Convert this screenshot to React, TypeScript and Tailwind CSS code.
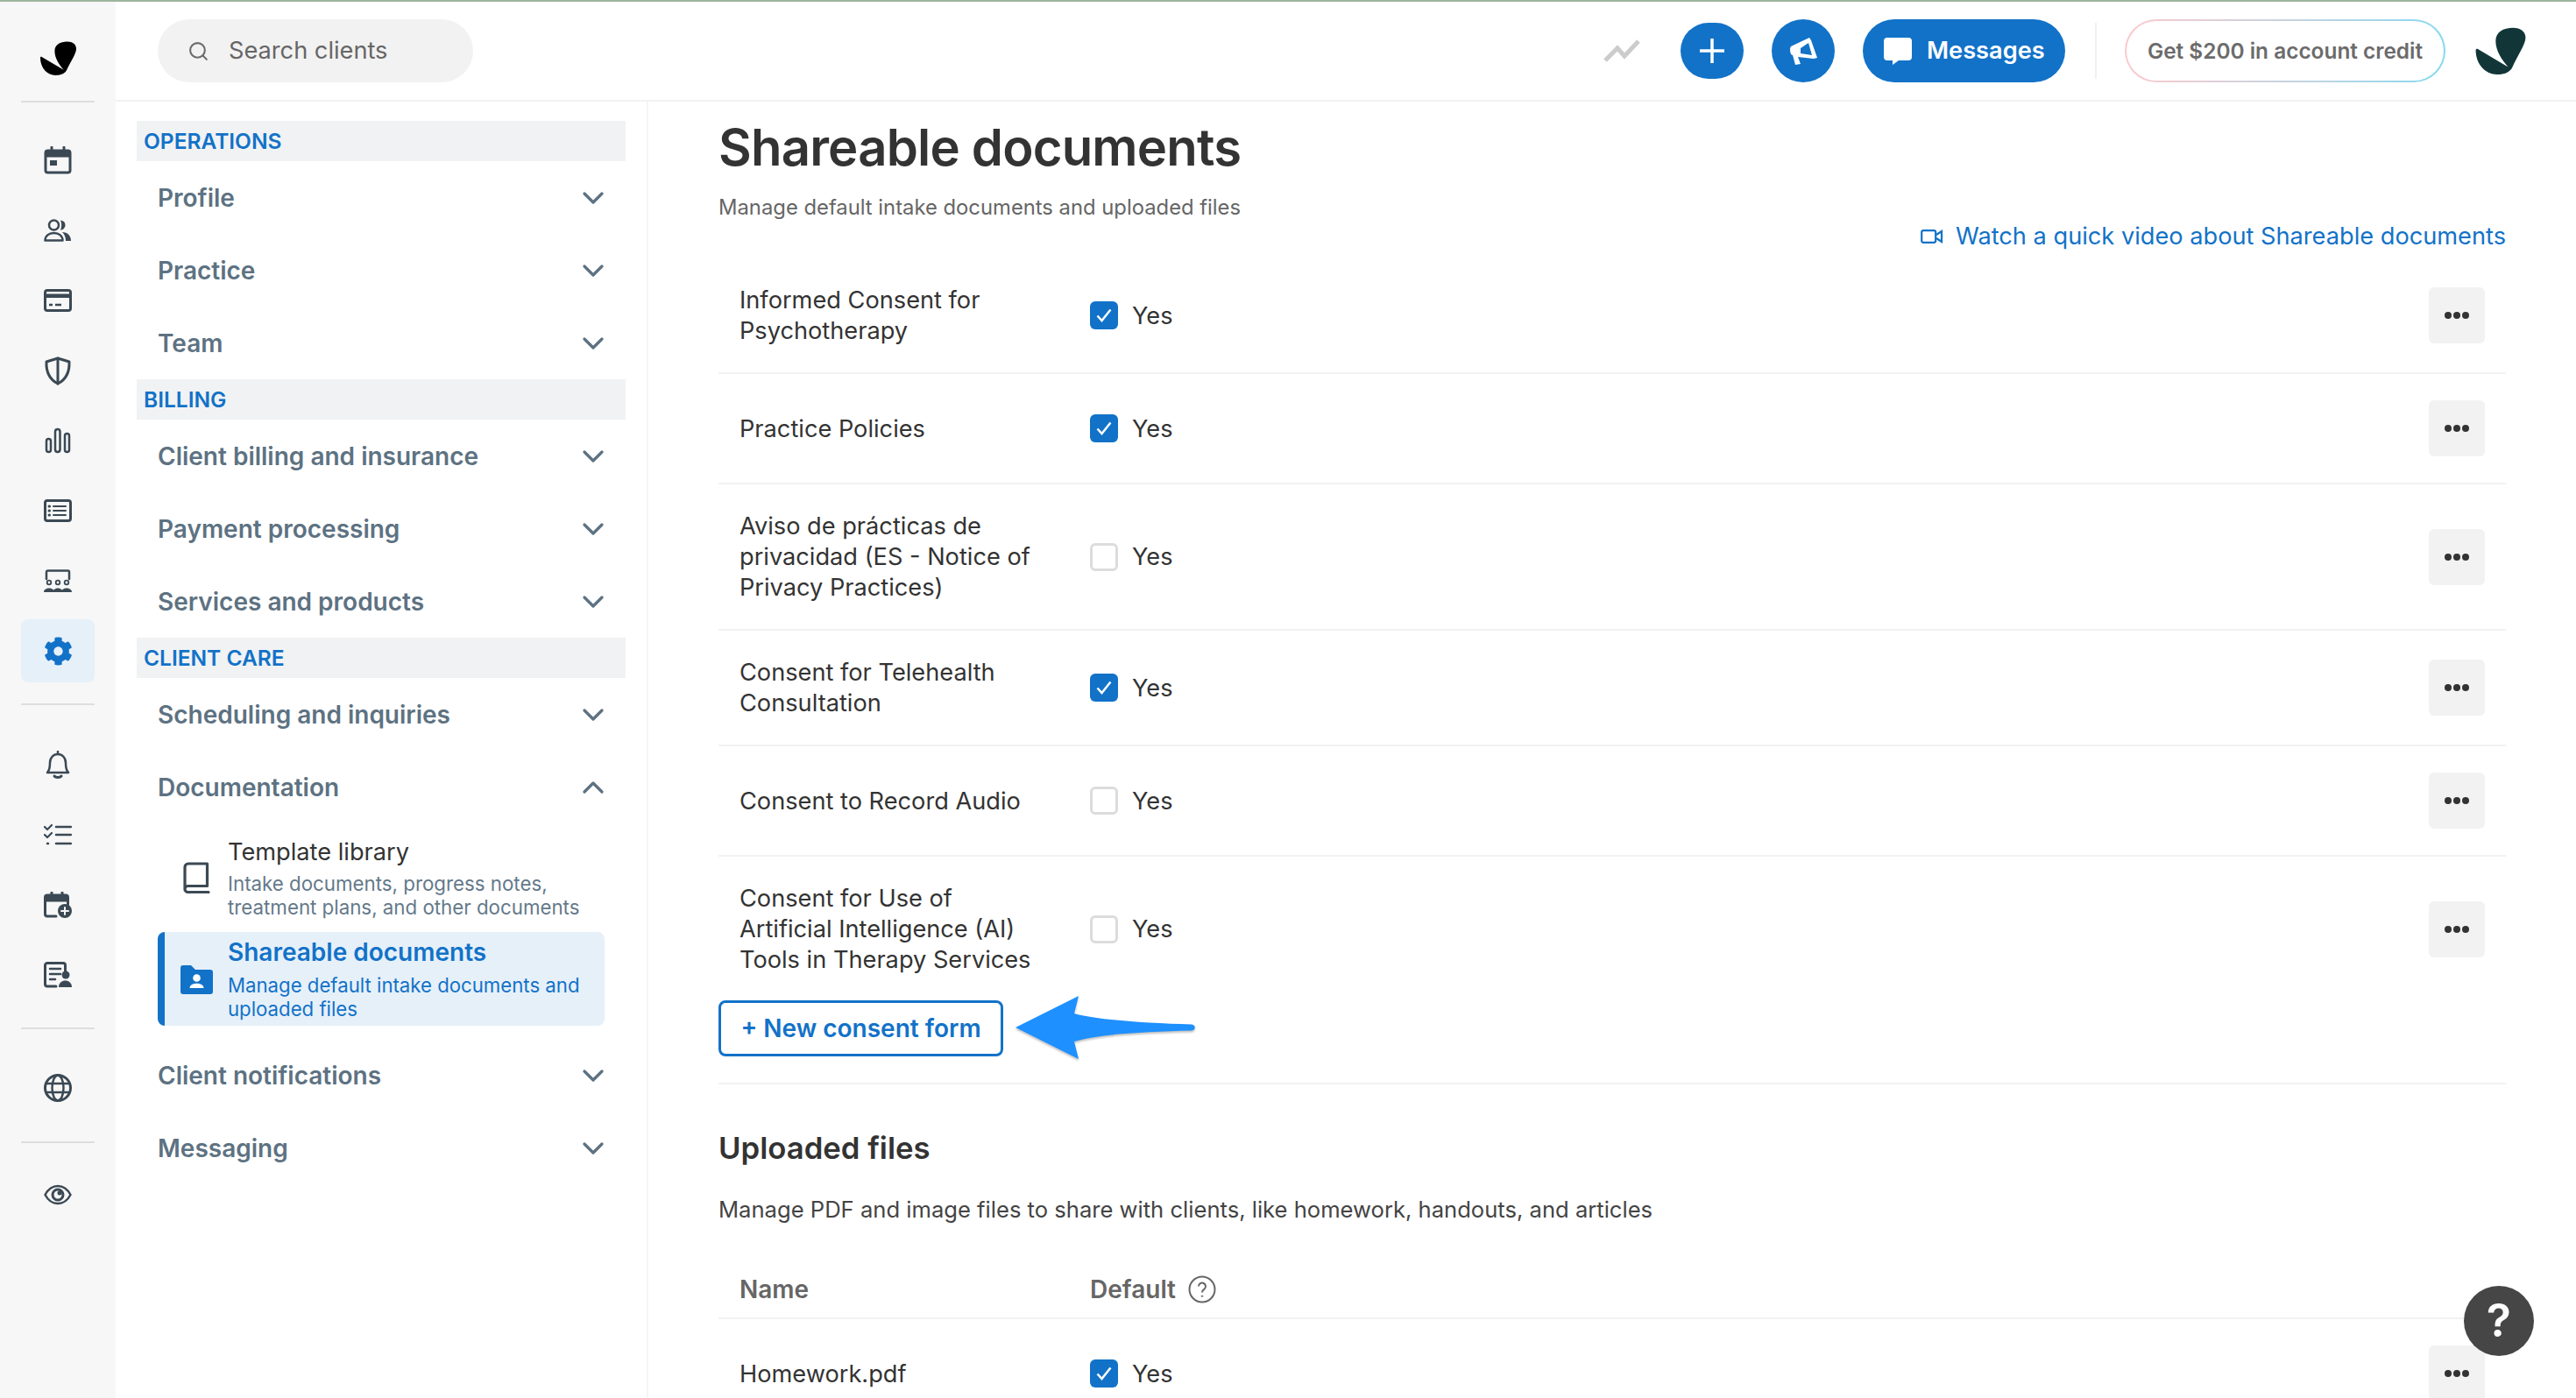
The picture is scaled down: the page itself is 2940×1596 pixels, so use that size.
import { ChevronDown, ChevronUp, Search } from 'lucide-react';
import { FaCog } from 'react-icons/fa';
import type { ReactNode } from 'react';

const ink = '#3b4954';

function Svg({ w = 32, h = 32, children }: { w?: number; h?: number; children: ReactNode }) {
  return (
    <svg width={w} height={h} viewBox={`0 0 ${w} ${h}`} fill="none" stroke={ink} strokeWidth={3} strokeLinecap="round" strokeLinejoin="round">
      {children}
    </svg>
  );
}

const CalendarIcon = () => (
  <Svg>
    <rect x="2" y="5" width="28" height="25" rx="2.5" />
    <path d="M2 6h28v6H2z" fill={ink} stroke={ink} strokeWidth={1} />
    <path d="M9 1v4M23 1v4" />
    <rect x="7" y="16" width="8" height="6" fill={ink} stroke="none" />
  </Svg>
);
const PeopleIcon = () => (
  <Svg h={26}>
    <circle cx="11.5" cy="7" r="5.5" strokeWidth={2.5} />
    <path d="M1.5 24.5c0-5 4-8.5 10-8.5s10 3.5 10 8.5z" strokeWidth={2.5} />
    <path d="M19 1.5a5.5 5.5 0 0 1 0 11c1.500-3 1.500-8 0-11zM21 15c6 0 10 4 10 10h-6c0-4-1-7-4-10z" fill={ink} stroke="none" />
  </Svg>
);
const CardIcon = () => (
  <Svg h={26}>
    <rect x="1.500" y="1.500" width="29" height="23" rx="2.500" />
    <path d="M1.500 6h29v3.500h-29z" fill={ink} strokeWidth={1} />
    <path d="M6 18h4M13 18h7" strokeWidth={2.500} strokeLinecap="butt" />
  </Svg>
);
const ShieldIcon = () => (
  <Svg h={33}>
    <path d="M16 2l13 4c.5 12-3 20-13 25C6 26 2.500 18 3 6z" />
    <path d="M16 2v29" />
  </Svg>
);
const BarsIcon = () => (
  <Svg h={30}>
    <rect x="3" y="13" width="5" height="15" rx="2.500" strokeWidth={2.500} />
    <rect x="13" y="2" width="5.500" height="26" rx="2.700" strokeWidth={2.500} />
    <rect x="24" y="7" width="5" height="21" rx="2.500" strokeWidth={2.500} />
  </Svg>
);
const ListIcon = () => (
  <Svg h={26}>
    <rect x="1.500" y="1.500" width="29" height="23" rx="2.500" />
    <path d="M11 8h14M11 13h14M11 18h14" strokeWidth={2} />
    <path d="M6 8h.5M6 13h.5M6 18h.5" strokeWidth={3} />
  </Svg>
);
const RoomIcon = () => (
  <Svg h={27}>
    <path d="M3 11V3a1.500 1.500 0 0 1 1.500-1.500h23A1.500 1.500 0 0 1 29 3v8" strokeWidth={2.500} />
    <circle cx="6" cy="15" r="2.300" strokeWidth={1.800} />
    <circle cx="16" cy="15" r="2.300" strokeWidth={1.800} />
    <circle cx="26" cy="15" r="2.300" strokeWidth={1.800} />
    <path d="M0 26c0-6 12-6 12 0zM10.500 26c0-6 11-6 11 0zM20 26c0-6 12-6 12 0z" fill={ink} stroke="none" />
  </Svg>
);
const BellIcon = () => (
  <Svg w={30}>
    <path d="M15 1v3M3 25c3-3 3-7 3-11 0-6 4-10 9-10s9 4 9 10c0 4 0 8 3 11z" strokeWidth={2.500} />
    <path d="M11 29c1.500 2 6.500 2 8 0" strokeWidth={3} />
  </Svg>
);
const ChecklistIcon = () => (
  <Svg h={26}>
    <path d="M1 4l3 3 5-5M1 13l3 3 5-5" strokeWidth={2.200} />
    <path d="M14 4h17M14 13h17M14 23h17M4 23h1" strokeWidth={2.500} />
  </Svg>
);
const CalendarPlusIcon = () => (
  <Svg h={30}>
    <path d="M14 28H4a2.500 2.500 0 0 1-2.500-2.500V6.500A2.500 2.500 0 0 1 4 4h21a2.500 2.500 0 0 1 2.500 2.500V15" />
    <path d="M2 5h25v6H2z" fill={ink} strokeWidth={1} />
    <path d="M9 1v3M21 1v3" />
    <circle cx="24" cy="22" r="8" fill={ink} stroke="none" />
    <path d="M24 18v8M20 22h8" stroke="#f7f7f7" strokeWidth={2} />
  </Svg>
);
const NotesIcon = () => (
  <Svg h={30}>
    <path d="M14 28H4a2.500 2.500 0 0 1-2.500-2.500V4A2.500 2.500 0 0 1 4 1.500h18A2.500 2.500 0 0 1 24.500 4v7" />
    <path d="M7 8h12M7 14h12M7 20h6" strokeWidth={2.500} />
    <circle cx="25" cy="15" r="4.500" fill={ink} stroke="none" />
    <path d="M17 29c0-10 15-10 15 0z" fill={ink} stroke="none" />
  </Svg>
);
const GlobeIcon = () => (
  <Svg>
    <circle cx="16" cy="16" r="14.500" />
    <ellipse cx="16" cy="16" rx="6.500" ry="14.500" strokeWidth={2.500} />
    <path d="M2.500 11h27M2.500 21h27" strokeWidth={2.500} />
  </Svg>
);
const EyeIcon = () => (
  <Svg h={24}>
    <path d="M1.500 12C5 5.500 10 2 16 2s11 3.500 14.500 10C27 18.500 22 22 16 22S5 18.500 1.500 12z" strokeWidth={2.500} />
    <circle cx="16" cy="12" r="6" strokeWidth={3} />
    <circle cx="18" cy="10" r="2.500" fill={ink} stroke="none" />
  </Svg>
);
const BookIcon = () => (
  <Svg w={33} h={36}>
    <path d="M4 32V6a4 4 0 0 1 4-4h21.500v25.500H7.500a3.500 3.500 0 0 0 0 7H31" strokeWidth={3.200} />
  </Svg>
);
const FolderIcon = () => (
  <svg width="37" height="33" viewBox="0 0 37 33">
    <path d="M0 3a3 3 0 0 1 3-3h9l5 5h17a3 3 0 0 1 3 3v22a3 3 0 0 1-3 3H3a3 3 0 0 1-3-3z" fill="#1272c8" />
    <circle cx="18.500" cy="14.500" r="4.300" fill="#fff" />
    <path d="M10.500 26c0-7 16-7 16 0z" fill="#fff" />
  </svg>
);

// brand mark, same drawing in the rail and the top bar
const Logo = ({ color, w, h }: { color: string; w: number; h: number }) => (
  <svg width={w} height={h} viewBox="16 12 40 38">
    <path
      d="M16 30.500C16 29.500 17 29 18 29.700L42 44C37 38 32 31 32 23C32 16 38 12.500 46 12.500C52 12.500 56 15.500 56 20.500C56 26 50 34 45 45C42 49 38 50 33 50C24 50 16 42 16 30.500Z"
      fill={color}
    />
  </svg>
);

function RailItem({ children, active }: { children: ReactNode; active?: boolean }) {
  return (
    <div className={`flex h-[72px] w-[84px] items-center justify-center rounded-lg ${active ? 'bg-[#e6f0f9]' : ''}`}>{children}</div>
  );
}

function Rail() {
  return (
    <aside className="flex w-[132px] shrink-0 flex-col items-center bg-[#f7f7f7]">
      <div className="flex h-[113px] items-center justify-center pt-4">
        <Logo color="#000" w={41} h={39} />
      </div>
      <div className="h-[2px] w-[84px] bg-[#dedede]" />
      <div className="mt-[30px] flex flex-col gap-2">
        <RailItem><CalendarIcon /></RailItem>
        <RailItem><PeopleIcon /></RailItem>
        <RailItem><CardIcon /></RailItem>
        <RailItem><ShieldIcon /></RailItem>
        <RailItem><BarsIcon /></RailItem>
        <RailItem><ListIcon /></RailItem>
        <RailItem><RoomIcon /></RailItem>
        <RailItem active><FaCog size={33} color="#1272c8" /></RailItem>
      </div>
      <div className="mt-6 h-[2px] w-[84px] bg-[#dedede]" />
      <div className="mt-[32px] flex flex-col gap-2">
        <RailItem><BellIcon /></RailItem>
        <RailItem><ChecklistIcon /></RailItem>
        <RailItem><CalendarPlusIcon /></RailItem>
        <RailItem><NotesIcon /></RailItem>
      </div>
      <div className="mt-6 h-[2px] w-[84px] bg-[#dedede]" />
      <div className="mt-[31px]"><RailItem><GlobeIcon /></RailItem></div>
      <div className="mt-[25px] h-[2px] w-[84px] bg-[#dedede]" />
      <div className="mt-[23px]"><RailItem><EyeIcon /></RailItem></div>
    </aside>
  );
}

function TopBar() {
  return (
    <header className="flex h-[114px] shrink-0 items-center justify-between border-b-2 border-[#f2f2f2] pl-12 pr-[57px]">
      <div className="flex h-[72px] w-[360px] items-center rounded-full bg-[#f2f2f2] pl-[34px]">
        <Search size={25} strokeWidth={2} color="#6b6b6b" />
        <span className="ml-[22px] text-[27.2px] text-[#666]">Search clients</span>
      </div>
      <div className="flex items-center">
        <svg width="42" height="28" viewBox="0 0 42 28" fill="none" stroke="#cccccc" strokeWidth="5">
          <path d="M2 25 16 11l8 9L40 3" />
        </svg>
        <button className="ml-[46px] flex h-16 w-[72px] items-center justify-center rounded-full bg-[#1272c8]">
          <svg width="28" height="28" viewBox="0 0 28 28" stroke="#fff" strokeWidth="3.500"><path d="M14 0v28M0 14h28" /></svg>
        </button>
        <button className="ml-8 flex h-[72px] w-[72px] items-center justify-center rounded-full bg-[#1272c8]">
          <svg width="31" height="31" viewBox="0 0 31 31">
            <path fillRule="evenodd" fill="#fff" d="M0 13C0 11 1 9.500 3 9L22 0l2 3 7 20-4 1-18-2 3 8-6 1-3-11C1 20 0 17 0 13zM21 6l-9 6v6l13 2z" />
          </svg>
        </button>
        <button className="ml-8 flex h-[72px] w-[231px] items-center rounded-full bg-[#1272c8] pl-6 text-[27.2px] font-semibold text-white">
          <svg width="32" height="31" viewBox="0 0 32 31"><path fill="#fff" d="M4 0h24a4 4 0 0 1 4 4v18a4 4 0 0 1-4 4H17l-7 5v-5H4a4 4 0 0 1-4-4V4a4 4 0 0 1 4-4z" /></svg>
          <span className="ml-[17px]">Messages</span>
        </button>
        <div className="ml-[34px] h-16 w-[2px] bg-[#f0f0f0]" />
        <div className="ml-[32px] h-[72px] w-[366px] rounded-full bg-linear-to-r from-[#fbc9cd] to-[#85d9f0] p-[2px]">
          <div className="flex h-full items-center justify-center rounded-full bg-white text-[24.4px] font-semibold text-[#6b6b6b]">
            Get $200 in account credit
          </div>
        </div>
        <div className="ml-[34px]"><Logo color="#123638" w={58} h={54} /></div>
      </div>
    </header>
  );
}

function MenuRow({ label, open }: { label: string; open?: boolean }) {
  const Chevron = open ? ChevronUp : ChevronDown;
  return (
    <div className="flex h-[83px] items-center justify-between pl-6 pr-[17px] text-[28px] font-semibold text-[#5d7282]">
      <span>{label}</span>
      <Chevron size={40} strokeWidth={2} color="#5d7282" />
    </div>
  );
}

function SectionHead({ label }: { label: string }) {
  return <div className="flex h-[46px] items-center bg-[#f1f2f4] pl-2 text-[24.5px] font-semibold text-[#1272c8]">{label}</div>;
}

function Sidebar() {
  return (
    <nav className="w-[608px] shrink-0 border-r-2 border-[#f5f5f5] pl-6 pr-6 pt-[22px]">
      <SectionHead label="OPERATIONS" />
      <MenuRow label="Profile" />
      <MenuRow label="Practice" />
      <MenuRow label="Team" />
      <SectionHead label="BILLING" />
      <MenuRow label="Client billing and insurance" />
      <MenuRow label="Payment processing" />
      <MenuRow label="Services and products" />
      <SectionHead label="CLIENT CARE" />
      <MenuRow label="Scheduling and inquiries" />
      <MenuRow label="Documentation" open />
      <div className="ml-6 mr-[24px] flex h-[124px] pt-4">
        <div className="mt-[28px] flex w-[80px] justify-center pl-[6px]"><BookIcon /></div>
        <div>
          <div className="text-[27.2px] leading-[33px] text-[#333]">Template library</div>
          <div className="mt-[6px] text-[22.3px] leading-[27px] text-[#64798a]">
            Intake documents, progress notes,<br />treatment plans, and other documents
          </div>
        </div>
      </div>
      <div className="ml-6 mr-[24px] flex h-[107px] rounded-lg border-l-8 border-[#1272c8] bg-[#e6f0f9] pt-[7px]">
        <div className="mt-[31px] flex w-[72px] justify-center"><FolderIcon /></div>
        <div>
          <div className="text-[28px] font-semibold leading-[33px] text-[#1272c8]">Shareable documents</div>
          <div className="mt-[7px] text-[22.2px] leading-[27px] text-[#1272c8]">
            Manage default intake documents and<br />uploaded files
          </div>
        </div>
      </div>
      <div className="mt-[15px]">
        <MenuRow label="Client notifications" />
        <MenuRow label="Messaging" />
      </div>
    </nav>
  );
}

function Check({ on }: { on?: boolean }) {
  return on ? (
    <span className="flex size-8 items-center justify-center rounded-md bg-[#1272c8]">
      <svg width="18" height="16" viewBox="0 0 18 16" fill="none" stroke="#fff" strokeWidth="2.500"><path d="M1.500 8.500 6.500 14 16.500 1.500" /></svg>
    </span>
  ) : (
    <span className="size-8 rounded-md border-[3px] border-[#dcdcdc] bg-white" />
  );
}

function Row({ lines, on, last }: { lines: string[]; on?: boolean; last?: boolean }) {
  return (
    <div className={`flex items-center py-[30px] pl-[24px] pr-6 text-[27.2px] leading-[35px] text-[#333] ${last ? '' : 'border-b-2 border-[#f2f2f2]'}`}>
      <div className="w-[400px] shrink-0">
        {lines.map((l) => (
          <div key={l}>{l}</div>
        ))}
      </div>
      <Check on={on} />
      <span className="ml-4">Yes</span>
      <button className="ml-auto flex size-16 items-center justify-center gap-[2px] rounded-md bg-[#f2f2f2]">
        <i className="size-2 rounded-full bg-[#333]" />
        <i className="size-2 rounded-full bg-[#333]" />
        <i className="size-2 rounded-full bg-[#333]" />
      </button>
    </div>
  );
}

function Main() {
  return (
    <main className="min-w-0 flex-1 px-20">
      <h1 className="mt-[18px] text-[58px] font-semibold leading-[68px] tracking-[-0.8px] text-[#333]">Shareable documents</h1>
      <p className="mt-[19px] text-[23.8px] leading-8 text-[#666]">Manage default intake documents and uploaded files</p>
      <div className="mb-[9px] mt-px flex items-center justify-end text-[27.2px] leading-8 text-[#1272c8]">
        <svg width="26" height="16" viewBox="0 0 26 16" fill="none" stroke="#1272c8" strokeWidth="2.200">
          <rect x="1.200" y="1.200" width="16" height="13.600" rx="2" />
          <path d="M18 6l6-4v12l-6-4" />
        </svg>
        <span className="ml-[14px]">Watch a quick video about Shareable documents</span>
      </div>

      <Row lines={['Informed Consent for', 'Psychotherapy']} on />
      <Row lines={['Practice Policies']} on />
      <Row lines={['Aviso de prácticas de', 'privacidad (ES - Notice of', 'Privacy Practices)']} />
      <Row lines={['Consent for Telehealth', 'Consultation']} on />
      <Row lines={['Consent to Record Audio']} />
      <Row lines={['Consent for Use of', 'Artificial Intelligence (AI)', 'Tools in Therapy Services']} last />

      <div className="border-b-2 border-[#f2f2f2] pb-[30px]">
        <div className="-mt-px flex h-16 items-center">
          <button className="h-16 w-[325px] rounded-lg border-[3px] border-[#1272c8] text-[28px] font-semibold text-[#1272c8]">+ New consent form</button>
          <svg className="ml-[14px] drop-shadow-[0_2px_1px_rgba(0,0,0,0.25)]" width="205" height="74" viewBox="0 0 205 74">
            <path
              fill="#1e90ff"
              d="M0 36 72 0 67 20C90 27 150 31 201 32.500 206 33 206 39 201 39.500 150 41 95 43 67 52L72 72z"
            />
          </svg>
        </div>
      </div>

      <h2 className="mt-[50px] text-[34.7px] font-semibold leading-[44px] text-[#333]">Uploaded files</h2>
      <p className="mt-[31px] text-[25.6px] leading-9 text-[#444]">Manage PDF and image files to share with clients, like homework, handouts, and articles</p>

      <div className="mt-[55px] flex items-center border-b-2 border-[#f2f2f2] pb-[14px] pl-[24px] text-[28px] font-semibold leading-9 text-[#666]">
        <span className="w-[400px]">Name</span>
        <span>Default</span>
        <svg className="ml-[14px]" width="32" height="32" viewBox="0 0 32 32" fill="none" stroke="#666" strokeWidth="2">
          <circle cx="16" cy="16" r="14.500" />
          <path d="M12 12.500a4 4 0 1 1 6.500 3.200c-1.500 1-2.500 1.800-2.500 3.800" />
          <path d="M16 23v1.500" strokeWidth="2.500" />
        </svg>
      </div>
      <Row lines={['Homework.pdf']} on last />
    </main>
  );
}

export default function App() {
  return (
    <div className="flex h-[1596px] flex-col overflow-hidden bg-white text-[#333] [font-family:Inter,sans-serif]">
      <div className="h-[2px] shrink-0 bg-[#9db59d]" />
      <div className="flex min-h-0 flex-1">
        <Rail />
        <div className="flex min-w-0 flex-1 flex-col">
          <TopBar />
          <div className="flex min-h-0 flex-1">
            <Sidebar />
            <Main />
          </div>
        </div>
      </div>
      <button className="fixed bottom-12 right-12 flex size-20 items-center justify-center rounded-full bg-[#464646] text-[52px] font-semibold text-white">?</button>
    </div>
  );
}
